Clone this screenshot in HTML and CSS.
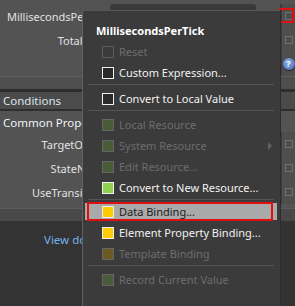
FILE: index.html
```html
<!DOCTYPE html>
<html lang="en">
<head>
  <meta charset="UTF-8">
  <title>Properties</title>
  <link rel="stylesheet" href="styles.css">
</head>
<body>
  <div class="props">
    <div class="row">
      <span class="label">MillisecondsPerTick</span>
      <span class="field"></span>
      <span class="cell"><i class="chk"></i></span>
    </div>
    <div class="row">
      <span class="label">TotalTicks</span>
      <span class="value"></span>
      <span class="cell"><i class="chk"></i></span>
    </div>
    <div class="row">
      <span class="label"></span>
      <span class="value"></span>
      <span class="cell"><i class="help">?</i></span>
    </div>
    <div class="spacer"></div>
  </div>
  <div class="section">Conditions</div>
  <div class="props last">
    <div class="group">Common Properties</div>
    <div class="row">
      <span class="label">TargetObject</span>
      <span class="value"></span>
      <span class="cell"><i class="chk"></i></span>
    </div>
    <div class="row">
      <span class="label">StateName</span>
      <span class="value"></span>
      <span class="cell"><i class="chk"></i></span>
    </div>
    <div class="row">
      <span class="label">UseTransitions</span>
      <span class="value"></span>
      <span class="cell"><i class="chk"></i></span>
    </div>
  </div>
  <div class="bar"></div>
  <div class="footer">
    <a class="link">View documentation</a>
  </div>

  <div class="marker"></div>

  <div class="menu">
    <div class="menu-title">MillisecondsPerTick</div>
    <div class="item disabled"><i class="box empty"></i>Reset</div>
    <div class="item"><i class="box dark"></i>Custom Expression...</div>
    <div class="sep"></div>
    <div class="item"><i class="box dark"></i>Convert to Local Value</div>
    <div class="sep"></div>
    <div class="item disabled"><i class="box green-off"></i>Local Resource</div>
    <div class="item disabled"><i class="box green-off"></i>System Resource<span class="arrow"></span></div>
    <div class="item disabled"><i class="box green-off"></i>Edit Resource...</div>
    <div class="item"><i class="box green"></i>Convert to New Resource...</div>
    <div class="sep"></div>
    <div class="item active"><i class="box yellow"></i>Data Binding...</div>
    <div class="item"><i class="box yellow"></i>Element Property Binding...</div>
    <div class="item disabled"><i class="box yellow-off"></i>Template Binding</div>
    <div class="sep"></div>
    <div class="item disabled"><i class="box green-off"></i>Record Current Value</div>
  </div>
</body>
</html>
```

FILE: styles.css
```css
body {
  margin: 0;
  width: 295px;
  height: 306px;
  overflow: hidden;
  position: relative;
  background: #333333;
  color: #e2e2e2;
  font-family: "Noto Sans", "Open Sans", sans-serif;
  font-size: 11px;
}
.props {
  background: #535353;
}
.props:first-child {
  padding-top: 4px;
}
.props.last {
  padding-bottom: 4px;
}
.row {
  display: grid;
  grid-template-columns: 110px 170px 15px;
  height: 24px;
  align-items: center;
}
.label {
  text-align: right;
  white-space: nowrap;
  padding-right: 2px;
}
.field {
  height: 24px;
  margin-right: 24px;
  background: #3a3a3a;
  border-radius: 3px;
}
.cell {
  height: 100%;
  background: #4e4e4e;
  border-left: 2px solid #3e3e3e;
  display: flex;
  align-items: center;
  justify-content: center;
}
.chk {
  width: 6px;
  height: 6px;
  border: 1px solid #6e6e6e;
}
.help {
  width: 12px;
  height: 12px;
  border-radius: 50%;
  background: radial-gradient(circle at 40% 35%, #8fb0e8, #3e63ad);
  box-shadow: 0 1px 1px #222;
  color: #fff;
  font-style: normal;
  font-weight: bold;
  font-size: 9px;
  line-height: 12px;
  text-align: center;
}
.spacer {
  height: 12px;
  border-top: 1px solid #5f5f5f;
  background: #4e4e4e;
}
.section {
  border-top: 3px solid #2d2d2d;
  border-bottom: 2px solid #2e2e2e;
  background: #4b4b4b;
  color: #dde6ef;
  height: 17px;
  line-height: 17px;
  padding-left: 3px;
  font-size: 11.5px;
}
.group {
  height: 21px;
  line-height: 23px;
  padding-left: 3px;
  font-size: 11.5px;
  color: #eef2f6;
}
.bar {
  height: 12px;
  border-top: 1px solid #5e5e5e;
  background: #494949;
}
.footer {
  padding: 11px 0 0 44px;
  font-size: 11.5px;
}
.link {
  color: #74b2ec;
}

.marker {
  position: absolute;
  left: 279px;
  top: 8px;
  width: 11px;
  height: 11px;
  border: 2px solid #e01010;
}

.menu {
  position: absolute;
  left: 82px;
  top: 10px;
  width: 197px;
  height: 295px;
  background: #3b3b3b;
  border-left: 1px solid #626262;
  border-top: 1px solid #575757;
  box-shadow: 1px 0 0 #2c2c2c;
}
.menu-title {
  padding: 10px 0 0 13px;
  height: 20px;
  line-height: 20px;
  font-weight: bold;
  color: #ffffff;
}
.item {
  position: relative;
  display: flex;
  align-items: center;
  height: 21px;
  padding-left: 19px;
  color: #f2f2f2;
  white-space: nowrap;
}
.item.disabled {
  color: #6d6d6d;
}
.item.active {
  height: 17px;
  margin: 2px 3px 2px 2px;
  padding-left: 17px;
  background: #a9a9a9;
  color: #1c1c1c;
}
.item.active::after {
  content: "";
  position: absolute;
  left: 2px;
  right: 4px;
  top: -1px;
  bottom: -1px;
  border: 2px solid #e01010;
}
.box {
  width: 10px;
  height: 10px;
  border: 1px solid #f0f0f0;
  margin-right: 5px;
}
.box.empty {
  border-color: #5c5c5c;
}
.box.dark {
  background: #2a2a2a;
}
.box.green {
  background: #8fd14f;
}
.box.green-off {
  background: #4a5c37;
  border-color: #666666;
}
.box.yellow {
  background: #ffcc00;
}
.box.yellow-off {
  background: #6b5a22;
  border-color: #666666;
}
.arrow {
  margin-left: auto;
  margin-right: 8px;
  border-left: 4px solid #626262;
  border-top: 4px solid transparent;
  border-bottom: 4px solid transparent;
}
.sep {
  height: 1px;
  margin: 1px 6px 3px 5px;
  background: #555555;
}
```
